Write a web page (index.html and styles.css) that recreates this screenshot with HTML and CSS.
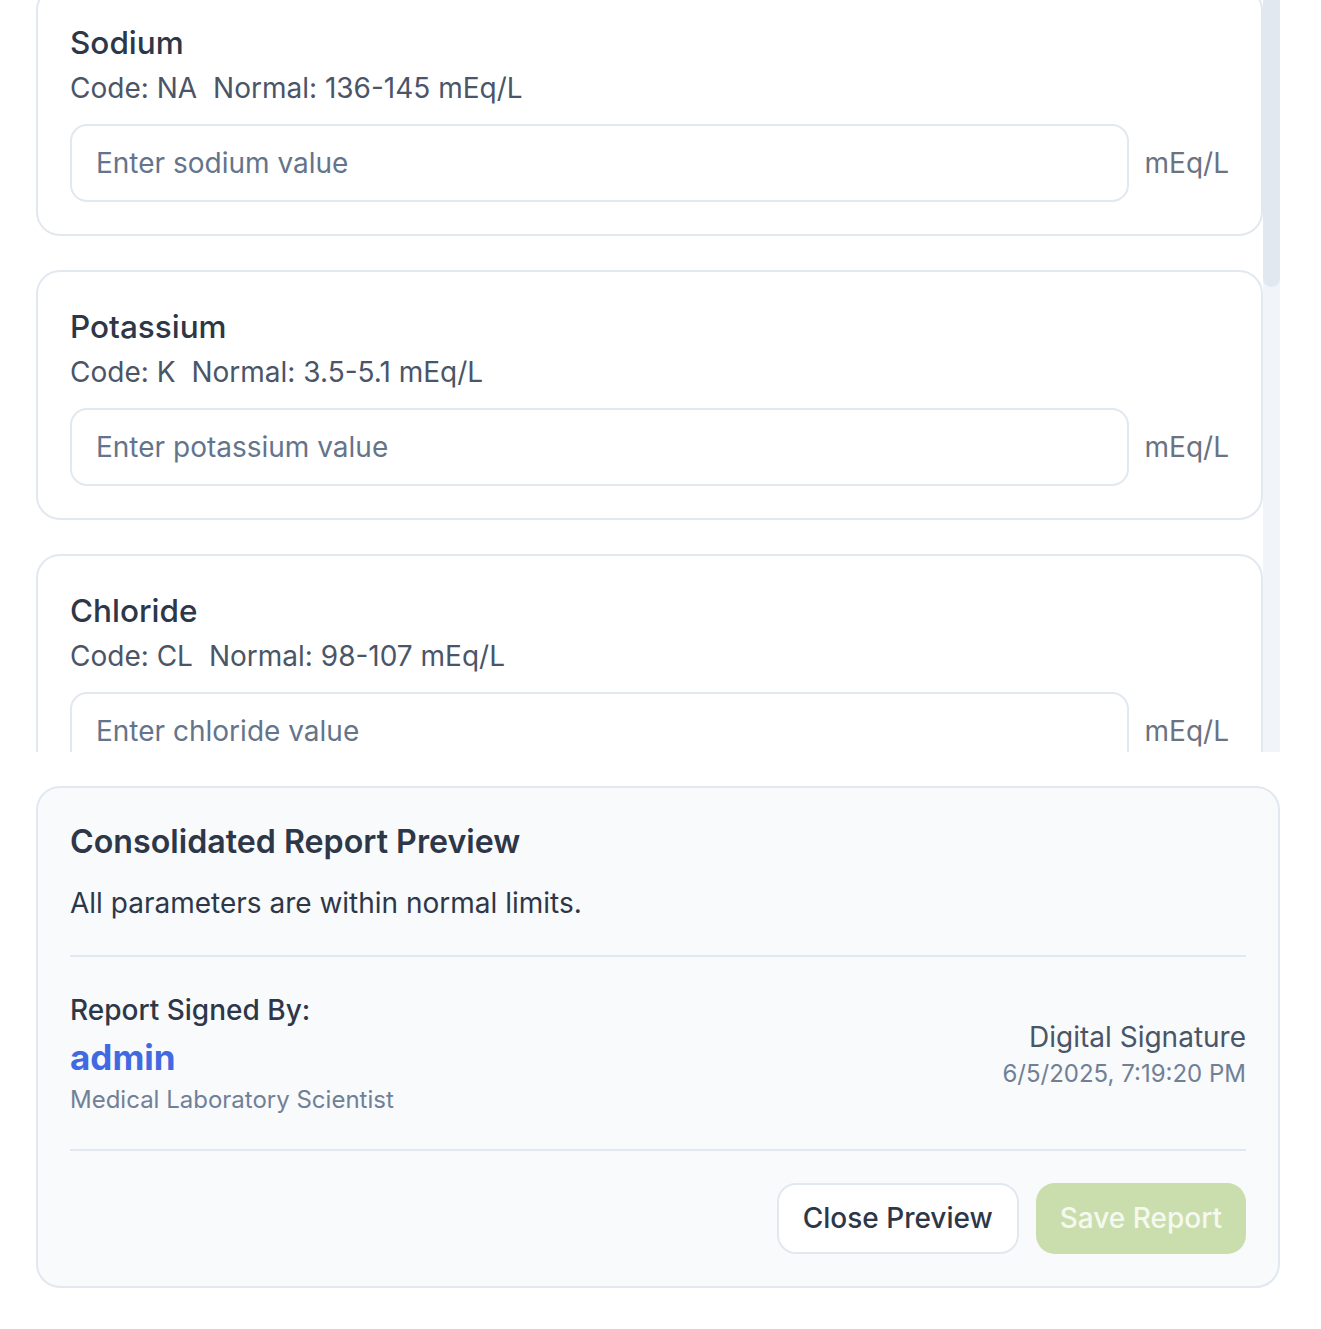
FILE: index.html
```html
<!DOCTYPE html>
<html lang="en">
<head>
<meta charset="utf-8">
<title>Electrolyte Panel</title>
<link rel="stylesheet" href="styles.css">
</head>
<body>
<main class="page">
  <div class="list-frame">
    <div class="param-list" id="paramList">
      <section class="param-card">
        <h3 class="param-name">Sodium</h3>
        <div class="param-meta"><span>Code: NA</span><span>Normal: 136-145 mEq/L</span></div>
        <div class="param-input-row">
          <input class="param-input" type="text" placeholder="Enter sodium value">
          <span class="param-unit">mEq/L</span>
        </div>
      </section>
      <section class="param-card">
        <h3 class="param-name">Potassium</h3>
        <div class="param-meta"><span>Code: K</span><span>Normal: 3.5-5.1 mEq/L</span></div>
        <div class="param-input-row">
          <input class="param-input" type="text" placeholder="Enter potassium value">
          <span class="param-unit">mEq/L</span>
        </div>
      </section>
      <section class="param-card">
        <h3 class="param-name">Chloride</h3>
        <div class="param-meta"><span>Code: CL</span><span>Normal: 98-107 mEq/L</span></div>
        <div class="param-input-row">
          <input class="param-input" type="text" placeholder="Enter chloride value">
          <span class="param-unit">mEq/L</span>
        </div>
      </section>
      <section class="param-card">
        <h3 class="param-name">Bicarbonate</h3>
        <div class="param-meta"><span>Code: HCO3</span><span>Normal: 22-29 mEq/L</span></div>
        <div class="param-input-row">
          <input class="param-input" type="text" placeholder="Enter bicarbonate value">
          <span class="param-unit">mEq/L</span>
        </div>
      </section>
      <section class="param-card">
        <h3 class="param-name">Calcium</h3>
        <div class="param-meta"><span>Code: CA</span><span>Normal: 8.5-10.5 mg/dL</span></div>
        <div class="param-input-row">
          <input class="param-input" type="text" placeholder="Enter calcium value">
          <span class="param-unit">mg/dL</span>
        </div>
      </section>
      <section class="param-card">
        <h3 class="param-name">Magnesium</h3>
        <div class="param-meta"><span>Code: MG</span><span>Normal: 1.7-2.2 mg/dL</span></div>
        <div class="param-input-row">
          <input class="param-input" type="text" placeholder="Enter magnesium value">
          <span class="param-unit">mg/dL</span>
        </div>
      </section>
      <section class="param-card">
        <h3 class="param-name">Phosphorus</h3>
        <div class="param-meta"><span>Code: PHOS</span><span>Normal: 2.5-4.5 mg/dL</span></div>
        <div class="param-input-row">
          <input class="param-input" type="text" placeholder="Enter phosphorus value">
          <span class="param-unit">mg/dL</span>
        </div>
      </section>
    </div>
    <div class="scrollbar" aria-hidden="true"><div class="scrollbar-thumb"></div></div>
  </div>

  <section class="preview">
    <h2 class="preview-title">Consolidated Report Preview</h2>
    <p class="preview-summary">All parameters are within normal limits.</p>
    <div class="signature">
      <div class="signer">
        <div class="signer-label">Report Signed By:</div>
        <div class="signer-name">admin</div>
        <div class="signer-role">Medical Laboratory Scientist</div>
      </div>
      <div class="sig-stamp">
        <div class="sig-title">Digital Signature</div>
        <div class="sig-date">6/5/2025, 7:19:20 PM</div>
      </div>
    </div>
    <div class="actions">
      <button class="btn btn-outline" type="button">Close Preview</button>
      <button class="btn btn-save" type="button" disabled>Save Report</button>
    </div>
  </section>
</main>
<script src="app.js"></script>
</body>
</html>
```
FILE: styles.css
```css
* { box-sizing: border-box; }

html, body {
  margin: 0;
  background: #ffffff;
}

body {
  font-family: Inter, "Noto Sans", "Liberation Sans", sans-serif;
  color: #2d3748;
}

.page {
  width: 1244px;
  margin-left: 36px;
  padding-bottom: 40px;
  display: flex;
  flex-direction: column;
  gap: 34px;
}

/* ---------- scrolling parameter list ---------- */
.list-frame {
  height: 752px;
  display: flex;
}

.param-list {
  flex: 1 1 auto;
  min-width: 0;
  overflow: hidden;
  display: flex;
  flex-direction: column;
  gap: 34px;
}

.scrollbar {
  flex: 0 0 17px;
  background: #f1f5f9;
}

.scrollbar-thumb {
  height: 287px;
  background: #e2e8f0;
  border-radius: 0 0 9px 9px;
}

.param-card {
  flex: 0 0 auto;
  border: 2px solid #e2e8f0;
  border-radius: 24px;
  background: #ffffff;
  padding: 32px;
}

.param-name {
  margin: 0;
  font-size: 31.5px;
  line-height: 45px;
  font-weight: 500;
  color: #2d3748;
}

.param-meta {
  margin-top: 2px;
  display: flex;
  gap: 16px;
  font-size: 28px;
  line-height: 42px;
  color: #4a5568;
}

.param-input-row {
  margin-top: 15px;
  display: flex;
  align-items: center;
  gap: 16px;
}

.param-input {
  flex: 1 1 auto;
  min-width: 0;
  height: 78px;
  border: 2px solid #e2e8f0;
  border-radius: 17px;
  background: #ffffff;
  padding: 0 24px;
  font-family: inherit;
  font-size: 28px;
  color: #2d3748;
  outline: none;
}
.param-input::placeholder {
  color: #64748b;
  opacity: 1;
}

.param-unit {
  flex: 0 0 auto;
  font-size: 28px;
  line-height: 42px;
  color: #6b7280;
}

/* ---------- preview ---------- */
.preview {
  border: 2px solid #e2e8f0;
  border-radius: 24px;
  background: #f8fafc;
  padding: 32px;
}

.preview-title {
  margin: 0;
  font-size: 32.2px;
  line-height: 44px;
  font-weight: 600;
  color: #2d3748;
}

.preview-summary {
  margin: 17.5px 0 0;
  font-size: 28px;
  line-height: 42px;
  color: #2d3748;
}

.signature {
  margin-top: 31.5px;
  border-top: 2px solid #e2e8f0;
  border-bottom: 2px solid #e2e8f0;
  padding: 31.5px 0 32px;
  display: flex;
  justify-content: space-between;
  align-items: center;
}

.signer-label {
  font-size: 28px;
  line-height: 42px;
  font-weight: 500;
  color: #2d3748;
}

.signer-name {
  margin-top: 2px;
  font-size: 35px;
  line-height: 49px;
  font-weight: 700;
  color: #4169e1;
}

.signer-role {
  font-size: 24px;
  line-height: 35px;
  color: #718096;
}

.sig-stamp {
  text-align: right;
}

.sig-title {
  font-size: 28px;
  line-height: 42px;
  color: #4a5568;
}

.sig-date {
  font-size: 24px;
  line-height: 32px;
  color: #718096;
}

.actions {
  padding-top: 32px;
  display: flex;
  justify-content: flex-end;
  gap: 17px;
}

.btn {
  font-family: inherit;
  font-size: 28px;
  line-height: 42px;
  font-weight: 500;
  border-radius: 19px;
  cursor: pointer;
}

.btn-outline {
  padding: 12.5px 24px;
  background: #ffffff;
  border: 2px solid #e2e8f0;
  color: #2d3748;
}

.btn-save {
  padding: 14.5px 24px;
  border: none;
  background: #cadead;
  color: #f5f9ef;
  cursor: not-allowed;
}
```
FILE: app.js
```js
document.getElementById('paramList').scrollTop = 14;
```
